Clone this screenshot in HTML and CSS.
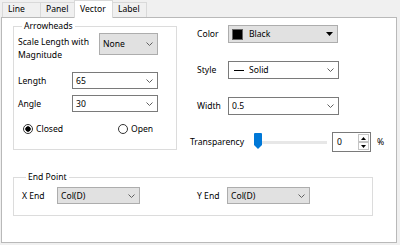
FILE: index.html
```html
<!DOCTYPE html>
<html lang="en">
<head>
<meta charset="UTF-8">
<title>Vector</title>
<link rel="stylesheet" href="styles.css">
</head>
<body>
<div class="tabs">
  <div class="tab t-line">Line</div>
  <div class="tab t-panel">Panel</div>
  <div class="tab t-vector active">Vector</div>
  <div class="tab t-label">Label</div>
</div>

<div class="panel">
  <div class="top">
    <!-- ARROWHEADS -->
    <fieldset class="group arrow">
      <legend>Arrowheads</legend>
      <div class="row scale">
        <span class="lbl">Scale Length with<br>Magnitude</span>
        <div class="combo gray none">None
          <svg class="chev" width="7" height="4" viewBox="0 0 7 4"><polyline points="0.5,0.5 3.5,3.5 6.5,0.5" fill="none" stroke="#606060" stroke-width="1"/></svg>
        </div>
      </div>
      <div class="row len">
        <span class="lbl">Length</span>
        <div class="combo wide">65
          <svg class="chev" width="7" height="4" viewBox="0 0 7 4"><polyline points="0.5,0.5 3.5,3.5 6.5,0.5" fill="none" stroke="#606060" stroke-width="1"/></svg>
        </div>
      </div>
      <div class="row ang">
        <span class="lbl">Angle</span>
        <div class="combo wide">30
          <svg class="chev" width="7" height="4" viewBox="0 0 7 4"><polyline points="0.5,0.5 3.5,3.5 6.5,0.5" fill="none" stroke="#606060" stroke-width="1"/></svg>
        </div>
      </div>
      <div class="radios">
        <label class="radio closed"><span class="dot on"></span>Closed</label>
        <label class="radio"><span class="dot"></span>Open</label>
      </div>
    </fieldset>

    <!-- LINE PROPS -->
    <div class="props">
      <div class="grid">
        <span class="plbl">Color</span>
        <div class="colorbtn">
          <span class="swatch"></span><span class="ctext">Black</span>
          <svg width="7" height="4" viewBox="0 0 7 4"><polygon points="0,0 7,0 3.5,4" fill="#000"/></svg>
        </div>
        <span class="plbl">Style</span>
        <div class="combo prop">
          <span class="style-val"><span class="stroke"></span>Solid</span>
          <svg class="chev" width="7" height="4" viewBox="0 0 7 4"><polyline points="0.5,0.5 3.5,3.5 6.5,0.5" fill="none" stroke="#606060" stroke-width="1"/></svg>
        </div>
        <span class="plbl">Width</span>
        <div class="combo prop">0.5
          <svg class="chev" width="7" height="4" viewBox="0 0 7 4"><polyline points="0.5,0.5 3.5,3.5 6.5,0.5" fill="none" stroke="#606060" stroke-width="1"/></svg>
        </div>
      </div>
      <div class="trans">
        <span class="tlbl">Transparency</span>
        <div class="slider">
          <div class="track"></div>
          <svg class="thumb" width="8" height="16" viewBox="0 0 8 16"><path d="M0 1 Q0 0 1 0 H7 Q8 0 8 1 V12 L4 16 L0 12 Z" fill="#0078d7"/></svg>
        </div>
        <div class="spin">
          <span class="sval">0</span>
          <div class="btns">
            <span><svg width="5" height="3" viewBox="0 0 5 3"><polygon points="0,3 5,3 2.5,0" fill="#000"/></svg></span>
            <span><svg width="5" height="3" viewBox="0 0 5 3"><polygon points="0,0 5,0 2.5,3" fill="#000"/></svg></span>
          </div>
        </div>
        <span class="pct">%</span>
      </div>
    </div>
  </div>

  <!-- END POINT -->
  <fieldset class="group end">
    <legend>End Point</legend>
    <div class="endrow">
      <span>X End</span>
      <div class="combo gray col">Col(D)
        <svg class="chev" width="7" height="4" viewBox="0 0 7 4"><polyline points="0.5,0.5 3.5,3.5 6.5,0.5" fill="none" stroke="#606060" stroke-width="1"/></svg>
      </div>
      <span></span>
      <span>Y End</span>
      <div class="combo gray col">Col(D)
        <svg class="chev" width="7" height="4" viewBox="0 0 7 4"><polyline points="0.5,0.5 3.5,3.5 6.5,0.5" fill="none" stroke="#606060" stroke-width="1"/></svg>
      </div>
    </div>
  </fieldset>
</div>
</body>
</html>
```

FILE: styles.css
```css
* { box-sizing:border-box; margin:0; padding:0; }
body {
  font-family:"Noto Sans","Segoe UI",sans-serif; font-size:8.6px; color:#000;
  background:#f0f0f0; width:400px; height:245px; overflow:hidden;
}

/* tabs */
.tabs { display:flex; align-items:flex-end; height:17px; padding-left:2px; }
.tab {
  height:15px; line-height:13px; padding-left:5px; background:#f0f0f0;
  border:1px solid #d9d9d9; border-bottom:none; margin-right:-1px;
}
.t-line { width:39px; }
.t-panel { width:35px; }
.t-vector { width:39px; }
.t-label { width:35px; }
.tab.active {
  height:18px; line-height:16px; background:#fff; margin-bottom:-1px;
  position:relative; z-index:1;
}

.panel {
  margin-left:1px; width:396px; height:226px; background:#fff;
  border:1px solid #b9b9b9; padding-left:11px;
}
.top { display:flex; }

/* group boxes */
.group { border:1px solid #dcdcdc; min-width:0; }
.group legend { margin-left:4px; padding:0 2px; line-height:12px; }

.arrow { margin-top:2px; width:164px; height:130px; padding:1px 17px 0 4px; }
.row { display:flex; align-items:center; }
.scale { height:29px; align-items:flex-start; }
.scale .lbl { width:81px; padding-top:3px; line-height:13px; }
.len { margin-top:10px; height:17px; }
.ang { margin-top:6px; height:17px; }
.len .lbl, .ang .lbl { width:54px; }

.combo {
  display:flex; align-items:center; justify-content:space-between;
  height:17px; border:1px solid #7a7a7a; background:#fff; padding:0 4px 0 3px;
}
.combo.gray { background:#e1e1e1; border-color:#adadad; }
.none { width:59px; height:22px; }
.wide { width:86px; }
.chev { flex:none; }

.radios { display:flex; align-items:center; height:19px; margin-top:7px; padding-left:5px; }
.radio { display:flex; align-items:center; }
.radio.closed { width:95px; }
.dot {
  width:10px; height:10px; border:1px solid #333; border-radius:50%;
  margin-right:3px; background:#fff;
}
.dot.on { background:radial-gradient(circle,#000 0 2.4px,#fff 3px); }

/* right column */
.props { margin-left:13px; padding-top:7px; }
.grid { display:grid; grid-template-columns:38px 111px; row-gap:18px; align-items:center; }
.plbl { padding-left:7px; }
.prop { height:18px; }
.colorbtn {
  display:flex; align-items:center; height:18px; width:110px; padding:0 4px 0 3px;
  background:#e1e1e1; border:1px solid #adadad;
}
.swatch { width:11px; height:11px; background:#000; border:1px solid #646464; margin-right:6px; }
.ctext { flex:1; }
.style-val { display:flex; align-items:center; }
.stroke { width:10px; height:1px; background:#000; margin:0 5px 0 2px; }

.trans { display:flex; align-items:center; margin-top:17px; height:20px; }
.tlbl { width:64px; }
.slider { position:relative; width:74px; height:20px; display:flex; align-items:center; }
.track { width:72px; height:3px; margin-left:1px; background:#e7e7e7; }
.thumb { position:absolute; left:0; top:1px; }
.spin {
  display:flex; width:39px; height:20px; margin-left:4px;
  border:1px solid #7a7a7a; background:#fff;
}
.sval { flex:1; padding-left:4px; line-height:18px; }
.btns { width:12px; display:flex; flex-direction:column; padding:1px 1px 1px 0; }
.btns span {
  flex:1; display:flex; align-items:center; justify-content:center;
  border:1px solid #c4c4c4; background:#fdfdfd;
}
.pct { margin-left:6px; }

/* end point */
.end { margin-top:19px; width:360px; height:45px; padding:4px 0 0 8px; }
.endrow {
  display:grid; grid-template-columns:35px 83px 57px 30px 83px;
  align-items:center; height:17px;
}
.col { height:17px; }
```
